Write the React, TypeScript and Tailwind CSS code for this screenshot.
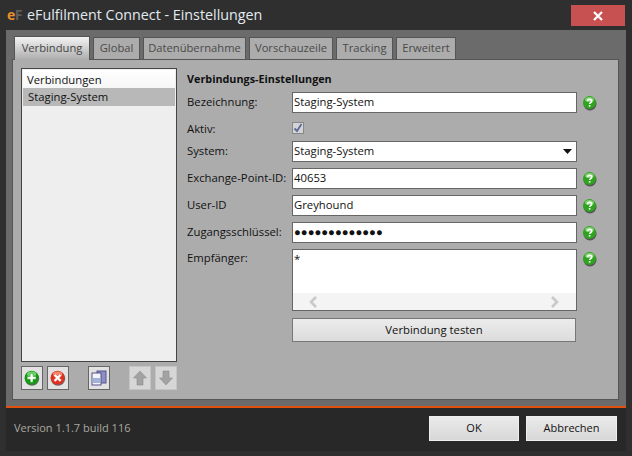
const tabs = [
  { label: 'Verbindung', width: 'w-[76px]' },
  { label: 'Global', width: 'w-[47px]' },
  { label: 'Datenübernahme', width: 'w-[103px]' },
  { label: 'Vorschauzeile', width: 'w-[84px]' },
  { label: 'Tracking', width: 'w-[57px]' },
  { label: 'Erweitert', width: 'w-[60px]' },
];

const Help = () => (
  <svg width="16" height="16" viewBox="0 0 16 16" className="shrink-0">
    <circle cx="8" cy="9" r="6.5" fill="#555" />
    <circle cx="7.5" cy="7.5" r="6.5" fill="#2fa51f" />
    <ellipse cx="7.5" cy="4.5" rx="4.5" ry="2.5" fill="#7fd06e" />
    <path d="M5.5 6.2 C5.5 3.8 9.7 3.8 9.7 6.2 C9.7 7.7 7.6 7.6 7.6 9" fill="none" stroke="#fff" strokeWidth="1.6" />
    <rect x="6.8" y="10" width="1.6" height="1.6" fill="#fff" />
  </svg>
);

const Row = ({ label, value }: { label: string; value: string }) => (
  <div className="flex items-center h-[21px] mb-1.5">
    <div className="w-[105px] shrink-0">{label}</div>
    <div className="w-[285px] h-[21px] bg-white border border-[#666] px-[1px] flex items-center">
      {value}
    </div>
    <div className="ml-[5px]"><Help /></div>
  </div>
);

const ToolButton = ({ children, disabled }: { children: React.ReactNode; disabled?: boolean }) => (
  <div className={`w-[22px] h-[24px] flex items-center justify-center border ${disabled ? 'border-[#c4c4c4] bg-[#d6d6d6]' : 'border-[#666] bg-[#e2e2e2]'}`}>
    {children}
  </div>
);

const RoundIcon = ({ fill, light, d }: { fill: string; light: string; d: string }) => (
  <svg width="16" height="16" viewBox="0 0 16 16">
    <circle cx="8" cy="8.6" r="7.2" fill="#666" />
    <circle cx="7.6" cy="7.8" r="7" fill={fill} />
    <ellipse cx="7.6" cy="4" rx="4.6" ry="2.6" fill={light} />
    <path d={d} fill="#fff" stroke={fill} strokeWidth="0.5" />
  </svg>
);

const Arrow = ({ down }: { down?: boolean }) => (
  <svg width="14" height="16" viewBox="0 0 14 16">
    <path d={down ? 'M4 1h6v7h3.5L7 15 .5 8H4z' : 'M4 15h6V8h3.5L7 1 .5 8H4z'} fill="#a2a2a2" stroke="#8e8e8e" strokeWidth="0.6" />
  </svg>
);

const ScrollChevron = ({ left }: { left?: boolean }) => (
  <svg width="10" height="12" viewBox="0 0 10 12">
    <path d={left ? 'M8 1 3 6l5 5' : 'M2 1l5 5-5 5'} fill="none" stroke="#c8c8c8" strokeWidth="2.6" />
  </svg>
);

export default function App() {
  return (
    <div className="w-[632px] h-[456px] bg-[#2f2f2f] flex flex-col overflow-hidden text-[#111] text-[11.3px] font-['Open_Sans','Noto_Sans',sans-serif]">
      {/* title bar */}
      <div className="h-[30px] shrink-0 flex items-center justify-between pl-[7px] pr-[7px]">
        <div className="flex items-center text-[#e2eaf0] text-[14.3px]">
          <span className="text-[14px] font-bold leading-none tracking-[-0.5px] mr-[5px]">
            <span className="text-[#e8902c]">e</span><span className="text-[#5e5e5e]">F</span>
          </span>
          eFulfilment Connect - Einstellungen
        </div>
        <div className="w-[54px] h-[21px] bg-[#c75050] flex items-center justify-center mt-[1px]">
          <svg width="10" height="10" viewBox="0 0 10 10">
            <path d="M1 1l8 8M9 1l-8 8" stroke="#fff" strokeWidth="2.2" />
          </svg>
        </div>
      </div>

      {/* main area */}
      <div className="flex-1 mx-[6px] bg-[#6b6b6b] pl-[6px] pr-[7px] pt-[6px] pb-[6px] flex flex-col min-h-0">
        <div className="flex pl-[2px] gap-[3px] h-[23px] shrink-0 items-end">
          {tabs.map((t, i) => (
            <div
              key={t.label}
              className={i === 0
                ? `${t.width} h-[24px] -mb-[1px] flex items-center justify-center text-[11.2px] text-[#444] border border-b-0 border-[#555] bg-gradient-to-b from-[#f4f4f4] to-[#acacac] relative z-10`
                : `${t.width} h-[22px] flex items-center justify-center text-[11.2px] text-[#4a4a4a] border border-b-0 border-[#555] bg-[#acacac]`}
            >
              {t.label}
            </div>
          ))}
        </div>
        <div className="flex-1 border border-[#555] bg-[#acacac] flex pl-[8px] pt-[8px] pb-[8px] pr-[9px] min-h-0">
          {/* left column */}
          <div className="w-[156px] shrink-0 mr-[10px] flex flex-col">
            <div className="h-[294px] bg-[#eeeeee] border border-[#444] p-[1px]">
              <div className="h-[18px] bg-gradient-to-b from-white to-[#f6f6f6] flex items-center pl-[4px] pt-[2px]">Verbindungen</div>
              <div className="h-[18px] bg-[#b8b8b8] flex items-center pl-[5px]">Staging-System</div>
            </div>
            <div className="flex mt-[4px]">
              <ToolButton><RoundIcon fill="#169a16" light="#6fd46f" d="M6.2 3.4h2.8v3h3v2.8h-3v3H6.2v-3h-3V6.4h3z" /></ToolButton>
              <div className="ml-[4px]"><ToolButton><RoundIcon fill="#e03020" light="#f58a70" d="M5.4 3.8l2.2 2.2 2.2-2.2 1.9 1.9-2.2 2.2 2.2 2.2-1.9 1.9-2.2-2.2-2.2 2.2-1.9-1.9 2.2-2.2-2.2-2.2z" /></ToolButton></div>
              <div className="ml-[19px]">
                <ToolButton>
                  <svg width="16" height="16" viewBox="0 0 16 16">
                    <rect x="6" y="1" width="9" height="12" fill="#8f8fc4" stroke="#55558a" />
                    <rect x="1" y="3" width="9" height="12" fill="#f4f4fa" stroke="#55558a" />
                    <rect x="2" y="8" width="7" height="5" fill="#9fb4d8" />
                  </svg>
                </ToolButton>
              </div>
              <div className="ml-[19px]"><ToolButton disabled><Arrow /></ToolButton></div>
              <div className="ml-[4px]"><ToolButton disabled><Arrow down /></ToolButton></div>
            </div>
          </div>

          {/* right column */}
          <div className="flex-1 min-w-0">
            <div className="font-bold text-[10.8px] h-[16px] mt-[3px] mb-[5px] flex items-center">Verbindungs-Einstellungen</div>
            <Row label="Bezeichnung:" value="Staging-System" />
            <div className="flex items-center h-[12px] mt-[9px] mb-[7px]">
              <div className="w-[105px] pt-[2px]">Aktiv:</div>
              <div className="w-[12px] h-[12px] bg-[#d4d4d4] border border-[#888] flex items-center justify-center">
                <svg width="10" height="10" viewBox="0 0 10 10"><path d="M1.5 5.5 4 8l4.5-7" fill="none" stroke="#5a6a9a" strokeWidth="1.8" /></svg>
              </div>
            </div>
            <div className="flex items-center h-[21px] mb-1.5">
              <div className="w-[105px]">System:</div>
              <div className="w-[285px] h-[21px] bg-white border border-[#666] pl-[1px] pr-[4px] flex items-center justify-between">
                Staging-System
                <svg width="9" height="5" viewBox="0 0 9 5"><path d="M0 0h9L4.5 5z" fill="#111" /></svg>
              </div>
            </div>
            <Row label="Exchange-Point-ID:" value="40653" />
            <Row label="User-ID" value="Greyhound" />
            <Row label="Zugangsschlüssel:" value="●●●●●●●●●●●●●" />
            <div className="flex items-start h-[62px]">
              <div className="w-[105px] pt-[1px]">Empfänger:</div>
              <div className="w-[285px] h-[62px] bg-white border border-[#666] flex flex-col justify-between">
                <div className="pl-[1px] pt-[1px]">*</div>
                <div className="h-[17px] bg-[#f4f4f4] flex items-center justify-between pl-[15px] pr-[16px]">
                  <ScrollChevron left />
                  <ScrollChevron />
                </div>
              </div>
              <div className="ml-[5px] mt-[2px]"><Help /></div>
            </div>
            <div className="ml-[105px] mt-[7px] w-[284px] h-[24px] border border-[#777] bg-gradient-to-b from-[#ececec] to-[#dcdcdc] flex items-center justify-center">
              Verbindung testen
            </div>
          </div>
        </div>
      </div>

      {/* footer */}
      <div className="h-[45px] shrink-0 mx-[6px] border-t-2 border-[#e0500f] bg-[#282828] flex items-center justify-between pl-[8px] pr-[9px] pb-[2px] text-[11px]">
        <span className="text-[#a8a8a0]">Version 1.1.7 build 116</span>
        <div className="flex gap-[7px]">
          <div className="w-[90px] h-[25px] border border-[#eee] bg-gradient-to-b from-[#eaeaea] to-[#d8d8d8] flex items-center justify-center">OK</div>
          <div className="w-[91px] h-[25px] border border-[#eee] bg-gradient-to-b from-[#eaeaea] to-[#d8d8d8] flex items-center justify-center">Abbrechen</div>
        </div>
      </div>
      <div className="h-[5px] shrink-0" />
    </div>
  );
}
